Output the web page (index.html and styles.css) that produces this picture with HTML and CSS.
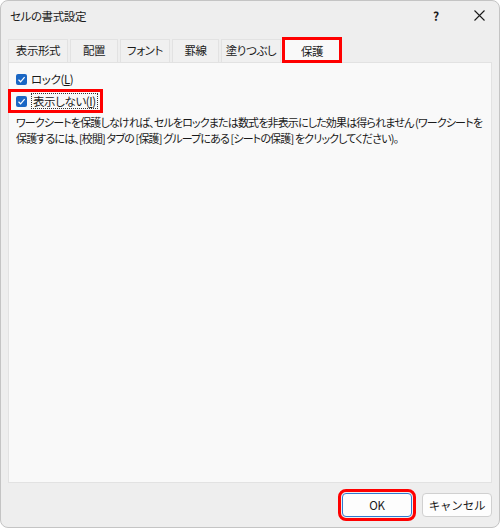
FILE: index.html
```html
<!DOCTYPE html>
<html lang="ja">
<head>
  <meta charset="UTF-8">
  <title>セルの書式設定</title>
  <link rel="stylesheet" href="styles.css">
</head>
<body>

  <div class="dialog">
    <!-- Title bar -->
    <div class="title-bar">
      <span class="title">セルの書式設定</span>
      <span class="help">?</span>
      <span class="close">
        <svg width="11" height="11" viewBox="0 0 11 11"><path d="M0.5 0.5 L10.5 10.5 M10.5 0.5 L0.5 10.5" stroke="#1a1a1a" stroke-width="1.1" fill="none"/></svg>
      </span>
    </div>

    <!-- Tabs -->
    <div class="tab-nav">
      <div class="tab" style="width: 60px">表示形式</div>
      <div class="tab" style="width: 48px">配置</div>
      <div class="tab" style="width: 50px">フォント</div>
      <div class="tab" style="width: 47px">罫線</div>
      <div class="tab" style="width: 60px">塗りつぶし</div>
      <div class="tab active marked" style="width: 56px">保護</div>
    </div>

    <!-- Protection page -->
    <div class="tab-page">
      <label class="check-row">
        <span class="checkbox"><svg width="9" height="9" viewBox="0 0 9 9"><path d="M1.5 4.8 L3.6 6.8 L7.6 2.2" stroke="#fff" stroke-width="1.2" fill="none"/></svg></span>
        <span>ロック(<u>L</u>)</span>
      </label>
      <label class="check-row marked-row">
        <span class="checkbox"><svg width="9" height="9" viewBox="0 0 9 9"><path d="M1.5 4.8 L3.6 6.8 L7.6 2.2" stroke="#fff" stroke-width="1.2" fill="none"/></svg></span>
        <span class="focus">表示しない(<u>I</u>)</span>
      </label>
      <p class="note">ワークシートを保護しなければ、セルをロックまたは数式を非表示にした効果は得られません (ワークシートを保護するには、[校閲] タブの [保護] グループにある [シートの保護] をクリックしてください)。</p>
    </div>

    <!-- Buttons -->
    <div class="footer">
      <button class="btn default marked-btn">OK</button>
      <button class="btn">キャンセル</button>
    </div>
  </div>

</body>
</html>
```

FILE: styles.css
```css
* { box-sizing: border-box; }

body {
  margin: 0;
  font-family: "Noto Sans CJK JP", "Noto Sans", sans-serif;
  font-feature-settings: "palt";
  font-size: 11.5px;
  letter-spacing: -0.4px;
  color: #1a1a1a;
}

.dialog {
  width: 500px;
  height: 528px;
  display: flex;
  flex-direction: column;
  background: #eeeeee;
  border: 1px solid #c4c4c4;
  border-radius: 8px;
  overflow: hidden;
}

/* Title bar */
.title-bar {
  height: 29px;
  display: flex;
  align-items: center;
  padding-left: 9px;
}

.title {
  flex: 1;
}

.help {
  width: 20px;
  font-weight: bold;
  font-size: 12px;
  margin-right: 21px;
}

.close {
  width: 25px;
  display: flex;
  align-items: center;
}

/* Tabs */
.tab-nav {
  display: flex;
  align-items: flex-end;
  gap: 2px;
  margin: 7px 0 0 7px;
  height: 25px;
}

.tab {
  height: 23px;
  line-height: 21px;
  text-align: center;
  background: #f0f0f0;
  border: 1px solid #e2e2e2;
  border-bottom: none;
  white-space: nowrap;
}

.tab.active {
  height: 25px;
  line-height: 24px;
  background: #f9f9f9;
  margin-left: 1px;
  position: relative;
  z-index: 1;
  margin-bottom: -1px;
}

.tab-page {
  flex: 1;
  margin: 0 7px;
  background: #f9f9f9;
  border: 1px solid #e2e2e2;
  padding: 7px 7px;
}

.check-row {
  display: flex;
  align-items: center;
  gap: 4px;
  height: 18px;
  margin-bottom: 4px;
  width: max-content;
}

.checkbox {
  width: 11px;
  height: 11px;
  border-radius: 2px;
  background: #1b67c4;
  display: flex;
  align-items: center;
  justify-content: center;
}

.focus {
  border: 1px dotted #333;
  padding: 0 1px;
  line-height: 14px;
}

.note {
  margin: 2px 0 0;
  font-size: 11px;
  letter-spacing: -0.85px;
  line-height: 16px;
}

/* Footer buttons */
.footer {
  height: 44px;
  display: flex;
  justify-content: flex-end;
  align-items: center;
  gap: 10px;
  padding: 0 7px 0 0;
}

.btn {
  width: 70px;
  height: 24px;
  font-family: inherit;
  font-size: 11.5px;
  letter-spacing: -0.2px;
  color: #1a1a1a;
  background: #fdfdfd;
  border: 1px solid #d0d0d0;
  border-radius: 4px;
  padding: 0;
}

.btn.default {
  border-color: #2f7ad0;
}

/* Red highlight frames */
.marked::after {
  content: "";
  position: absolute;
  left: -3px;
  right: -3px;
  top: -2px;
  bottom: 0;
  border: 3px solid #ff0000;
}

.marked-btn {
  outline: 3px solid #ff0000;
  outline-offset: 1px;
}

.marked-row {
  outline: 3px solid #ff0000;
  outline-offset: 0;
  margin-left: -5px;
  padding: 0 2px 0 5px;
  height: 18px;
}
```
